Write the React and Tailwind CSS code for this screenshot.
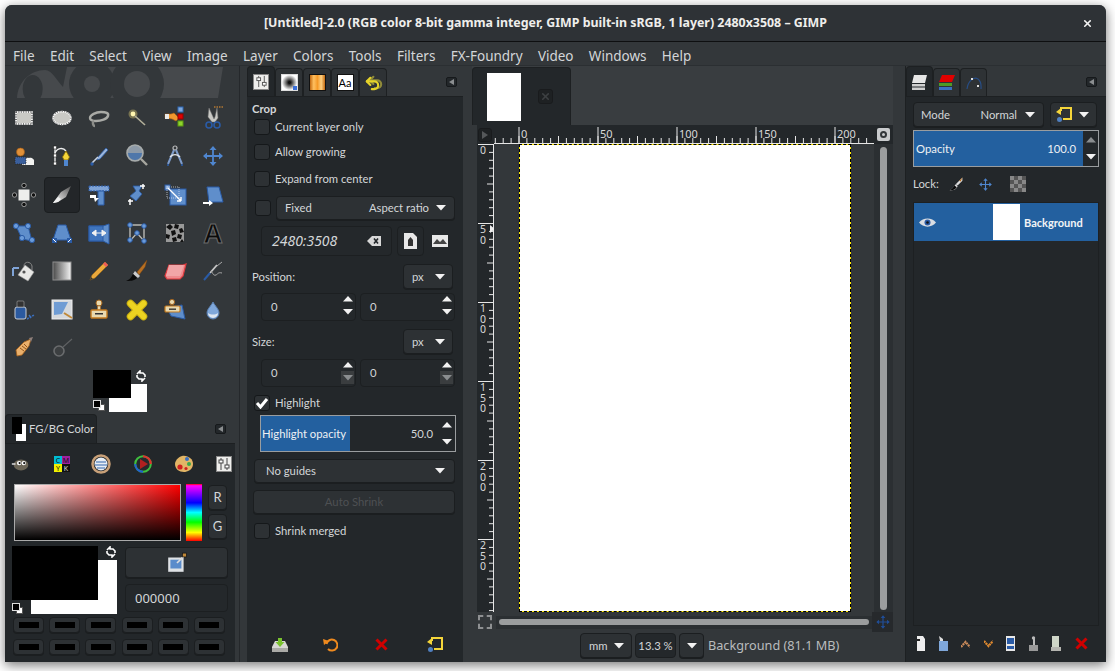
import { X, Undo2 } from "lucide-react";

const B = "#5f8ecb";
const D = "#2a5ba6";
const W = "#eeeeec";

const menus = ["File", "Edit", "Select", "View", "Image", "Layer", "Colors", "Tools", "Filters", "FX-Foundry", "Video", "Windows", "Help"];

function Ic({ children, size = 24, vb = "0 0 24 24", className = "" }) {
  return (
    <svg width={size} height={size} viewBox={vb} className={"shrink-0 " + className}>
      {children}
    </svg>
  );
}

function Down({ dim }) {
  return (
    <svg width="10" height="6" viewBox="0 0 10 6" className="shrink-0">
      <polygon points="0,0 10,0 5,5.5" fill={dim ? "#8a8d8f" : "#f2f2f2"} />
    </svg>
  );
}

function Up({ dim }) {
  return (
    <svg width="10" height="6" viewBox="0 0 10 6" className="shrink-0">
      <polygon points="0,5.5 10,5.5 5,0" fill={dim ? "#8a8d8f" : "#f2f2f2"} />
    </svg>
  );
}

function Move({ color = "#4f86cf", size = 24 }) {
  return (
    <Ic size={size}>
      <path d="M12 3v18M3 12h18" stroke={color} strokeWidth="1.8" />
      <path d="M12 2l3.5 4h-7zM12 22l3.5-4h-7zM2 12l4-3.5v7zM22 12l-4-3.5v7z" fill={color} />
    </Ic>
  );
}

const tools = [
  // row 1
  <Ic><rect x="4" y="6" width="16" height="12" fill="#c9c9c5" stroke="#fff" strokeWidth="1.6" /><rect x="4" y="6" width="16" height="12" fill="none" stroke="#111" strokeWidth="1.2" strokeDasharray="1 1.4" /></Ic>,
  <Ic><ellipse cx="12" cy="12" rx="9" ry="6.5" fill="#c9c9c5" stroke="#fff" strokeWidth="1.6" /><ellipse cx="12" cy="12" rx="9" ry="6.5" fill="none" stroke="#444" strokeWidth="1" strokeDasharray="1 1.4" /></Ic>,
  <Ic><path d="M3 12c0-3 6-6 11-6s8 1 7 4-7 5-12 5c-4 0-6-1-6-3z" fill="none" stroke="#a9aaa6" strokeWidth="2.4" /><path d="M7 15c-2 1-1 5 1 5" fill="none" stroke="#8c8d89" strokeWidth="2.4" /></Ic>,
  <Ic><circle cx="8" cy="8" r="4.5" fill="#f5e27a" opacity=".35" /><circle cx="8" cy="8" r="2.4" fill="#fff6b0" /><path d="M10 10l10 9" stroke="#b3b09a" strokeWidth="1.6" /></Ic>,
  <Ic><path d="M2 8h6l3-1 5 5-3 3-4-2-7-1z" fill="#f0972e" stroke="#a85d10" strokeWidth=".6" /><rect x="2" y="8" width="4" height="5" fill="#e8e8e8" /><rect x="15" y="1" width="5" height="5" fill="#7fa7da" stroke="#2f68b5" /><rect x="15" y="8" width="5" height="5" fill="#e00000" stroke="#900" /><rect x="15" y="15" width="5" height="5" fill="#8ed42c" stroke="#5d9a10" /></Ic>,
  <Ic><path d="M8 2l5 11 1-2 2-9 1 10-3 4h-3L7 11z" fill="#c9c9c5" stroke="#777" strokeWidth=".5" /><circle cx="8" cy="19" r="3" fill="none" stroke="#2a5ba6" strokeWidth="1.6" /><circle cx="16" cy="19" r="3" fill="none" stroke="#2a5ba6" strokeWidth="1.6" /><path d="M13 1h9" stroke="#f0972e" strokeWidth="1" strokeDasharray="1.5 1" /></Ic>,
  // row 2
  <Ic><path d="M12 17c0-3 3-4 5-3 2-1 6 1 5 4v3H10z" fill="#f2f2f0" /><rect x="3" y="13" width="11" height="7" fill="#3a5f9c" stroke="#222" strokeDasharray="1 1" strokeWidth=".7" /><circle cx="8.5" cy="8" r="4" fill="#e0913a" stroke="#a85d10" strokeWidth=".6" /></Ic>,
  <Ic><path d="M5 4v16" stroke="#eee" strokeWidth="1.4" /><path d="M5 9c2-5 8-6 11-2" stroke="#eee" strokeWidth="1.4" fill="none" /><rect x="3.5" y="2" width="3" height="3" fill="#fff" stroke="#222" strokeWidth=".6" /><rect x="3.5" y="10" width="3" height="3" fill="#fff" stroke="#222" strokeWidth=".6" /><rect x="3.5" y="18" width="3" height="3" fill="#fff" stroke="#222" strokeWidth=".6" /><path d="M16 7l3.5 6-1.5 3h-4l-1.5-3z" fill="#f5d53a" stroke="#8a6d00" strokeWidth=".8" /><rect x="14" y="16" width="4" height="6" fill="#4f86cf" /></Ic>,
  <Ic><path d="M19 4l-8 9-1 3 3-1 8-9z" fill="#9ab5dc" stroke="#2a5ba6" strokeWidth=".8" /><path d="M11 13l-6 6" stroke="#c8d3e3" strokeWidth="1.6" /><circle cx="5" cy="20" r="1.7" fill="#2a5ba6" /></Ic>,
  <Ic><circle cx="10" cy="9" r="8" fill="#8d9aa8" stroke="#a7abab" strokeWidth="1.6" /><path d="M3 9a7 7 0 0 0 14 0z" fill="#4f77aa" /><path d="M16 15l6 6" stroke="#a7a79f" strokeWidth="2.4" /></Ic>,
  <Ic><circle cx="12" cy="4" r="2" fill="none" stroke="#bbb" strokeWidth="1.2" /><path d="M11 6L5 20M13 6l6 14" stroke="#7e9ccb" strokeWidth="2" /><path d="M7 13c3-3 7-3 10 0" stroke="#dfe3e8" strokeWidth="1.6" fill="none" /><path d="M5 20v2M19 20v2" stroke="#2a5ba6" strokeWidth="1.6" /></Ic>,
  <Move />,
  // row 3
  <Ic><rect x="6.5" y="6.5" width="11" height="11" fill={W} /><circle cx="12" cy="2.5" r="2.2" fill="#111" stroke="#ddd" strokeWidth=".6" /><circle cx="12" cy="21.5" r="2.2" fill="#111" stroke="#ddd" strokeWidth=".6" /><circle cx="2.5" cy="12" r="2.2" fill="#111" stroke="#ddd" strokeWidth=".6" /><circle cx="21.5" cy="12" r="2.2" fill="#111" stroke="#ddd" strokeWidth=".6" /></Ic>,
  <Ic><defs><linearGradient id="kn" x1="0" y1="1" x2="1" y2="0"><stop offset="0" stopColor="#fff" /><stop offset="1" stopColor="#555" /></linearGradient></defs><path d="M3 20l8-11 10-6-5 11-8 5z" fill="url(#kn)" /><path d="M3 20l5-1 3-3-3-2z" fill="#f0f0f0" /></Ic>,
  <Ic><rect x="2" y="3" width="20" height="5" fill="#7fa3d6" stroke={D} strokeDasharray="2 1" /><path d="M11 8h6v14h-6z" fill={B} stroke={D} /><path d="M3 12h6v3h3l-4 4-1-4H3z" fill="#fff" /></Ic>,
  <Ic><path d="M8 3h9l-3 5 3 3-6 7-6-5 6-5z" fill={B} stroke={D} strokeWidth=".8" /><path d="M15 3h5M18 1v5" stroke="#fff" strokeWidth="1.5" /><path d="M3 18h5M5 16v6" stroke="#fff" strokeWidth="1.5" /></Ic>,
  <Ic><rect x="7" y="6" width="16" height="16" fill={B} stroke={D} /><rect x="2" y="2" width="5" height="5" fill="#8fb0dd" stroke={D} /><rect x="4" y="4" width="12" height="11" fill="none" stroke="#dfe8f4" strokeDasharray="1 1" strokeWidth=".7" /><path d="M5 5l13 13M18 18v-4M18 18h-4" stroke="#fff" strokeWidth="1.4" fill="none" /></Ic>,
  <Ic><path d="M6 4h12l4 15H8z" fill={B} stroke={D} /><path d="M2 19h6v-2l4 3-4 3v-2H2z" fill="#fff" /></Ic>,
  // row 4
  <Ic><path d="M4 5h12l4 15-10-2z" fill={B} stroke={D} /><circle cx="4" cy="5" r="2.6" fill="#6b9bd9" stroke={D} /><circle cx="16" cy="5" r="2.6" fill="#6b9bd9" stroke={D} /><circle cx="20" cy="19" r="2.6" fill="#6b9bd9" stroke={D} /><circle cx="10" cy="17" r="2.6" fill="#6b9bd9" stroke={D} /></Ic>,
  <Ic><path d="M8 4h8l5 15H3z" fill={B} stroke={D} /><rect x="2" y="17" width="5" height="5" fill={D} /><rect x="17" y="17" width="5" height="5" fill={D} /><path d="M3 18l3 3M21 18l-3 3" stroke="#fff" /></Ic>,
  <Ic><path d="M2 5h14l6-2v20l-6-3H2z" fill={B} stroke={D} /><rect x="2" y="5" width="14" height="15" fill="#3f74bd" stroke={D} /><path d="M6 12h12M5 12l4-3v6zM19 12l-4-3v6z" fill="#f2f2f2" stroke="#f2f2f2" /></Ic>,
  <Ic><path d="M5 4h14v16l-7-8-7 8z" fill="none" stroke="#b9b9b4" strokeWidth="1.4" /><g fill="#6b9bd9" stroke={D}><circle cx="5" cy="4" r="2.3" /><circle cx="19" cy="5" r="2.3" /><circle cx="5" cy="19" r="2.3" /><circle cx="12" cy="12" r="2.3" /><circle cx="19" cy="20" r="2.3" /></g></Ic>,
  <Ic><rect x="3" y="3" width="18" height="18" fill="#999" /><g fill="#111"><path d="M3 6l4-3 3 3-3 3zM12 3l4 1-1 4-4-1zM19 7l2 4-4 1-1-4zM8 10l4-1 1 4-4 2zM3 13l4 1-1 4-3-1zM15 13l4 1-1 4-4-1zM9 17l4-1 1 4-4 1zM19 18l2 3h-4z" /></g></Ic>,
  <Ic><text x="12" y="22" textAnchor="middle" fontFamily="Liberation Sans, sans-serif" fontWeight="700" fontSize="27" fill="#0a0a0a" stroke="#6a6a6a" strokeWidth="1">A</text></Ic>,
  // row 5
  <Ic><path d="M1 9v8" stroke="#7fa3d6" strokeWidth="2" /><path d="M1 9h6" stroke="#7fa3d6" strokeWidth="2" /><path d="M13 6l9 7-6 9-10-6z" fill="#e8e8e6" stroke="#999" strokeWidth=".6" /><circle cx="12" cy="13" r="1.6" fill="#555" /><path d="M12 7c0-5 7-5 8 0v4" fill="none" stroke="#888" strokeWidth="1" /></Ic>,
  <Ic><defs><linearGradient id="gr" x1="0" x2="1"><stop offset="0" stopColor="#4a4a4a" /><stop offset="1" stopColor="#f4f4f4" /></linearGradient></defs><rect x="3" y="3" width="18" height="18" fill="url(#gr)" stroke="#8e8e8e" /></Ic>,
  <Ic><path d="M18 3l3 3L8 19l-5 2 2-5z" fill="#eba93c" stroke="#9c6a12" strokeWidth=".6" /><path d="M18 3l3 3-2 2-3-3z" fill="#ec5a5a" /><path d="M3 21l1-3 2 2z" fill="#333" /></Ic>,
  <Ic><path d="M22 1L12 13l2 3 6-8z" fill="#b86f22" stroke="#7a4310" strokeWidth=".4" /><path d="M10 12l5 5-2 2-5-4z" fill="#ccc" /><path d="M8 15l4 4c-3 3-7 3-11 3 3-1 5-3 7-7z" fill="#0a0a0a" /></Ic>,
  <Ic><path d="M6 6h14l3-1-3 12-3 3H4l-2-3z" fill="#ee8a8e" stroke="#e03a3e" strokeWidth="1.2" /><path d="M6 6h15l-4 11H3z" fill="#f1a5a7" /></Ic>,
  <Ic><path d="M16 6L9 14" stroke="#c7c7c7" strokeWidth="1.8" /><path d="M9 14l-6 7" stroke="#2a5ba6" strokeWidth="2" /><path d="M21 3l-5 4M10 12c2 2 2 5 5 4 2-1 2-3 6-2" stroke="#aaa" fill="none" /></Ic>,
  // row 6
  <Ic><rect x="3" y="9" width="11" height="12" rx="2" fill="#2b5aa0" stroke="#c8cdd4" strokeWidth="1" /><rect x="5" y="3" width="7" height="6" rx="1" fill="#333" stroke="#aaa" strokeWidth=".6" /><path d="M15 21l7-4M17 17l2 3" stroke="#3a6fbf" strokeWidth="1.5" strokeDasharray="2 1" /></Ic>,
  <Ic size={24}><rect x="2" y="2" width="20" height="19" fill="#d5d8dc" stroke="#eee" /><path d="M4 4h14l-6 12-8 1z" fill="#6f9cd4" /><path d="M14 15l8 5" stroke="#c08838" strokeWidth="2" /></Ic>,
  <Ic><circle cx="12" cy="5" r="3" fill="#e8d9b0" stroke="#a5651e" /><rect x="10.5" y="8" width="3" height="4" fill="#e8d9b0" stroke="#a5651e" strokeWidth=".6" /><rect x="4" y="12" width="16" height="8" rx="1" fill="#e8d9b0" stroke="#c47a1e" strokeWidth="1.4" /><rect x="8" y="15" width="8" height="1.5" fill="#333" /></Ic>,
  <Ic><path d="M5.500 5.500l13 13M18.500 5.500l-13 13" stroke="#c9ae10" strokeWidth="7.500" strokeLinecap="round" /><path d="M5.500 5.500l13 13M18.500 5.500l-13 13" stroke="#ecd321" strokeWidth="5.500" strokeLinecap="round" /></Ic>,
  <Ic><path d="M4 10l15-3 3 14-14-3z" fill={B} stroke={D} /><circle cx="9" cy="4" r="2.6" fill="#e8d9b0" stroke="#a5651e" /><rect x="2" y="8" width="15" height="6" rx="1" fill="#e8d9b0" stroke="#c47a1e" strokeWidth="1.2" /><rect x="6" y="10.5" width="7" height="1.4" fill="#333" /></Ic>,
  <Ic><path d="M12 4c2 4 6 7 6 11a6 6 0 0 1-12 0c0-4 4-7 6-11z" fill="#7fa7da" stroke="#5a7fb0" /><path d="M7 15a5 5 0 0 0 10 0c-3 2-7 2-10 0z" fill="#dfe7f1" /></Ic>,
  // row 7
  <Ic><path d="M4 14l8-8 7-3-2 7-7 9-5 1z" fill="#eab06c" stroke="#a8621a" strokeWidth=".8" /><path d="M8 12l4 3M10 10l4 3M12 8l3 3" stroke="#8a4b10" strokeWidth=".9" /><path d="M17 2l4-1-2 5z" fill="#8f7f7a" /></Ic>,
  <Ic><circle cx="9" cy="15" r="5" fill="#3c3f41" stroke="#6a6c6e" strokeWidth="1.6" /><path d="M13 11l9-8" stroke="#5f6163" strokeWidth="1.2" /></Ic>,
];

function Box({ className = "", children }) {
  return <div className={"flex items-center bg-[#2d3134] border border-[#1b1e20] rounded-[4px] shadow-[0_1px_0_#1b1e20] " + className}>{children}</div>;
}

function Entry({ className = "", children }) {
  return <div className={"flex items-center bg-[#24282b] border border-[#1c1f21] rounded-[4px] " + className}>{children}</div>;
}

function Check({ checked, label, className = "" }) {
  return (
    <div className={"flex items-center gap-[5px] " + className}>
      <div className="w-[16px] h-[16px] flex items-center justify-center bg-[#2d3134] border border-[#15181a] rounded-[3px]">
        {checked && (
          <svg width="14" height="12" viewBox="0 0 14 12">
            <path d="M2 6l3.5 4L12 2" stroke="#fff" strokeWidth="3" fill="none" />
          </svg>
        )}
      </div>
      {label && <span>{label}</span>}
    </div>
  );
}

function Spin({ value, dim, w = "w-[95px]" }) {
  return (
    <Entry className={"h-[28px] pl-[9px] relative " + w}>
      <span>{value}</span>
      <div className="ml-auto w-[13px] mr-[1px] h-full flex flex-col items-center justify-around">
        <Up />
        <div className={"w-[13px] h-[13px] flex items-center justify-center " + (dim ? "bg-[#3a3d3f]" : "")}>
          <Down dim={dim} />
        </div>
      </div>
    </Entry>
  );
}

function DockTabs({ tabs, first, widths }) {
  return (
    <div className="flex items-end h-[30px]">
      {tabs.map((t, i) => (
        <div
          key={i}
          className={
            "flex items-center justify-center border border-b-0 border-[#1d2022] rounded-t-[4px] " +
            (i === first ? "h-[30px] bg-[#23272a]" : "h-[28px] bg-[#2e3235]") +
            " " +
            widths
          }
        >
          {t}
        </div>
      ))}
    </div>
  );
}

function ConfigBtn({ className = "" }) {
  return (
    <div className={"w-[11px] h-[10px] bg-[#23272a] border border-[#16191b] rounded-[2px] flex items-center justify-center " + className}>
      <svg width="5" height="6" viewBox="0 0 5 6">
        <polygon points="5,0 5,6 0,3" fill="#8b8e90" />
      </svg>
    </div>
  );
}

function Ruler() {
  const major = [0, 50, 100, 150, 200];
  const ticks = [];
  for (let i = -3; i < 45; i++) {
    const x = 25 + i * 7.9;
    ticks.push(<line key={i} x1={x} x2={x} y1={i % 5 === 0 ? 11 : 13} y2="18" stroke="#e6e6e6" />);
  }
  return (
    <svg width="380" height="19" className="block shrink-0">
      <line x1="0" x2="380" y1="18.5" y2="18.5" stroke="#e6e6e6" />
      {ticks}
      {major.map((m) => {
        const x = 25 + m * 1.58;
        return (
          <g key={m}>
            <line x1={x} x2={x} y1="2" y2="18" stroke="#e6e6e6" />
            <text x={x + 2} y="13" fontSize="11" fill="#d8d8d8" fontFamily="Noto Sans, sans-serif">{m}</text>
          </g>
        );
      })}
    </svg>
  );
}

function VRuler() {
  const major = [0, 50, 100, 150, 200, 250];
  const ticks = [];
  for (let i = 0; i < 60; i++) {
    const y = i * 7.9 + 0.5;
    ticks.push(<line key={i} x1={i % 5 === 0 ? 10 : 12} x2="17" y1={y} y2={y} stroke="#e6e6e6" />);
  }
  return (
    <svg width="17" height="468" className="block shrink-0">
      <line x1="16.5" x2="16.5" y1="0" y2="468" stroke="#e6e6e6" />
      {ticks}
      {major.map((m) => {
        const y = m * 1.58;
        return (
          <g key={m}>
            <line x1="1" x2="17" y1={y + 0.5} y2={y + 0.5} stroke="#e6e6e6" />
            {String(m).split("").map((c, j) => (
              <text key={j} x="3" y={y + 10 + j * 10.5} fontSize="10.5" fill="#d8d8d8" fontFamily="Noto Sans, sans-serif">{c}</text>
            ))}
          </g>
        );
      })}
      <polygon points="13,81 18,85 13,89" fill="#eee" />
    </svg>
  );
}

export default function App() {
  return (
    <div className="w-[1115px] h-[671px] bg-white pl-[5px] pt-[5px] overflow-hidden font-['Lato',sans-serif] text-[#d3d6d8] text-[11.3px] leading-none">
      <div className="w-[1101px] h-[657px] flex flex-col bg-[#33373a] rounded-t-[7px] shadow-[0_3px_12px_rgba(0,0,0,0.55)]">
        {/* title bar */}
        <div className="h-[37px] shrink-0 flex items-center bg-[#2e3236] border-b border-[#0e0f10] rounded-t-[7px] relative pr-[20px]">
          <span className="flex-1 text-center font-bold text-[12.4px] text-[#eeeeec] font-['Noto_Sans',sans-serif]">
            [Untitled]-2.0 (RGB color 8-bit gamma integer, GIMP built-in sRGB, 1 layer) 2480x3508 – GIMP
          </span>
          <X className="absolute right-[13px] top-[13px]" size={11} strokeWidth={3.5} color="#f4f4f4" />
        </div>

        {/* menu bar */}
        <div className="h-[24px] shrink-0 flex items-center gap-[15.3px] pl-[8px] pt-[6px] text-[13.5px] text-[#d3d6d8] border-b border-[#2b2f32] font-['Noto_Sans',sans-serif]">
          {menus.map((m) => (
            <span key={m}>{m}</span>
          ))}
        </div>

        <div className="flex-1 flex min-h-0">
          {/* toolbox */}
          <div className="w-[235px] shrink-0 flex flex-col border-r border-[#25282b]">
            <svg width="206" height="31" viewBox="0 0 206 31" className="ml-[12px] shrink-0 mt-[1px]">
              <path d="M0 31C1 14 14 3 28 3c7 0 12 11 18 17L50 0h156l-5 31z" fill="#46494c" />
              <ellipse cx="15.7" cy="22" rx="10" ry="14" fill="#33373a" />
              <circle cx="75" cy="17" r="23" fill="#33373a" />
              <circle cx="75" cy="17" r="8" fill="#46494c" />
              <circle cx="120" cy="17" r="27" fill="#33373a" />
              <circle cx="120" cy="17" r="13" fill="#46494c" />
            </svg>
            <div className="grid grid-cols-[repeat(6,37.8px)] auto-rows-[38.3px] mt-[1px]">
              {tools.map((t, i) => (
                <div key={i} className="flex items-center justify-center">
                  {i === 13 ? (
                    <div className="w-[36px] h-[36px] flex items-center justify-center bg-[#232629] border border-[#1b1e20] rounded-[4px]">{t}</div>
                  ) : (
                    t
                  )}
                </div>
              ))}
            </div>
            <div className="relative h-[44px] shrink-0 ml-[88px] mt-[3px]">
              <div className="absolute left-[16px] top-[14px] w-[38px] h-[28px] bg-white" />
              <div className="absolute left-0 top-0 w-[38px] h-[28px] bg-black" />
              <svg width="12" height="12" viewBox="0 0 12 12" className="absolute left-[42px] top-[0px]">
                <path d="M2 4l3-3v2h3l2 2v2M10 8l-3 3V9H4L2 7V5" stroke="#fff" strokeWidth="1.6" fill="none" />
              </svg>
              <div className="absolute left-[5px] top-[34px] w-[7px] h-[7px] bg-white border border-[#555]" />
              <div className="absolute left-0 top-[30px] w-[8px] h-[8px] bg-black border border-[#ddd]" />
            </div>

            {/* FG/BG dock */}
            <div className="flex items-end h-[29px] relative shrink-0 mr-[4px]">
              <div className="h-[29px] w-[92px] flex items-center gap-[3px] pl-[6px] bg-[#23272a] border border-b-0 border-[#1d2022] rounded-t-[4px] whitespace-nowrap">
                <div className="relative w-[14px] h-[24px] shrink-0">
                  <div className="absolute left-[4px] top-[7px] w-[10px] h-[17px] bg-white" />
                  <div className="absolute left-0 top-0 w-[10px] h-[17px] bg-black" />
                </div>
                <span>FG/BG Color</span>
              </div>
              <ConfigBtn className="absolute right-[9px] top-[10px]" />
            </div>
            <div className="flex-1 mr-[4px] bg-[#23272a] border-t border-[#1d2022] px-[9px] relative overflow-hidden">
              <div className="h-[40px] flex items-center -ml-[4px] justify-between pr-0 w-[222px]">
                <Ic size={22}><ellipse cx="12" cy="13" rx="8" ry="6" fill="#6c6657" /><circle cx="10" cy="11" r="2.4" fill="#fff" /><circle cx="15" cy="11" r="2.4" fill="#fff" /><circle cx="10.5" cy="11" r="1.2" fill="#111" /><circle cx="15.5" cy="11" r="1.2" fill="#111" /><path d="M2 12h4" stroke="#ddd" strokeWidth="1.6" /></Ic>
                <Ic size={16} vb="0 0 16 16"><rect width="8" height="8" fill="#00bcd4" /><rect x="8" width="8" height="8" fill="#a020a0" /><rect y="8" width="8" height="8" fill="#f0f000" /><rect x="8" y="8" width="8" height="8" fill="#111" /><text x="4" y="7" fontSize="7" textAnchor="middle" fontFamily="Noto Sans, sans-serif" fill="#111">C</text><text x="12" y="7" fontSize="7" textAnchor="middle" fontFamily="Noto Sans, sans-serif" fill="#111">M</text><text x="4" y="15" fontSize="7" textAnchor="middle" fontFamily="Noto Sans, sans-serif" fill="#111">Y</text><text x="12" y="15" fontSize="7" textAnchor="middle" fontFamily="Noto Sans, sans-serif" fill="#ddd">K</text></Ic>
                <Ic size={20} vb="0 0 20 20"><circle cx="10" cy="10" r="8.5" fill="none" stroke="#c8a078" strokeWidth="2.5" /><circle cx="10" cy="10" r="6.5" fill="#e8eef4" /><path d="M5 8h10M4 11h12M6 14h8" stroke="#6d93c4" strokeWidth="1.5" /></Ic>
                <Ic size={20} vb="0 0 20 20"><circle cx="10" cy="10" r="7.8" fill="#26292c" stroke="#3fbf3f" strokeWidth="2" /><path d="M10 2.2A7.8 7.8 0 0 1 17.8 10" fill="none" stroke="#e03030" strokeWidth="2" /><path d="M2.2 10A7.8 7.8 0 0 0 10 17.8" fill="none" stroke="#2060d0" strokeWidth="2" /><polygon points="7,5 15,10 7,15" fill="#b02020" /></Ic>
                <Ic size={20} vb="0 0 20 20"><path d="M8 2c6-1 11 3 11 8 0 6-6 8-9 8-5 0-9-3-9-8 0-3 3-7 7-8z" fill="#e2b566" /><circle cx="13" cy="5" r="2" fill="#3a6fbf" /><circle cx="15" cy="10" r="2" fill="#3aa84a" /><circle cx="6" cy="13" r="2.6" fill="#d02020" /><circle cx="12" cy="14.5" r="1.6" fill="#d02020" /></Ic>
                <div className="w-[16px] h-[16px] bg-[#eeeeec] border border-[#888] flex items-center justify-center">
                  <Ic size={14} vb="0 0 14 14"><path d="M4 1v12M10 1v12" stroke="#444" /><rect x="2" y="3" width="4" height="3" fill="#fff" stroke="#444" /><rect x="8" y="8" width="4" height="3" fill="#fff" stroke="#444" /></Ic>
                </div>
              </div>
              <div className="flex">
                <div className="w-[167px] h-[57px] shrink-0 border border-[#aaa] bg-[linear-gradient(to_top,#000,transparent),linear-gradient(to_right,#fff,#f00)]" />
                <div className="w-[16px] h-[57px] ml-[5px] shrink-0 bg-[linear-gradient(to_bottom,#f00_0%,#f0f_3%,#00f_33%,#0ff_50%,#0f0_67%,#ff0_85%,#f00_100%)]" />
                <div className="flex flex-col gap-[4px] ml-[6px] mt-[1px] shrink-0">
                  <Box className="w-[19px] h-[25px] justify-center text-[13px] bg-[#2a2d30]">R</Box>
                  <Box className="w-[19px] h-[25px] justify-center text-[13px] bg-[#2a2d30]">G</Box>
                </div>
              </div>
              <div className="flex mt-[5px] -ml-[2px]">
                <div className="relative w-[113px] h-[68px] shrink-0">
                  <div className="absolute left-[19px] top-[14px] w-[86px] h-[54px] bg-white" />
                  <div className="absolute left-0 top-0 w-[86px] h-[54px] bg-black" />
                  <svg width="12" height="12" viewBox="0 0 12 12" className="absolute left-[93px] top-0">
                    <path d="M2 4l3-3v2h3l2 2v2M10 8l-3 3V9H4L2 7V5" stroke="#fff" strokeWidth="1.6" fill="none" />
                  </svg>
                  <div className="absolute left-[4px] top-[61px] w-[7px] h-[7px] bg-white border border-[#555]" />
                  <div className="absolute left-0 top-[57px] w-[8px] h-[8px] bg-black border border-[#ddd]" />
                </div>
                <div className="flex flex-col gap-[6px] mt-[1px]">
                  <Box className="w-[103px] h-[31px] justify-center">
                    <Ic size={22} vb="0 0 20 20"><rect x="2" y="5" width="14" height="13" fill="#dfe2e5" /><rect x="4" y="7" width="10" height="8" fill="#5b8ccb" /><path d="M10 10l6-6" stroke="#ddd" strokeWidth="1.5" /><rect x="15" y="1" width="3.5" height="3.5" fill="#c08838" stroke="#111" strokeWidth=".6" /></Ic>
                  </Box>
                  <Entry className="w-[103px] h-[28px] pl-[9px] text-[13px] font-['Noto_Sans',sans-serif]">000000</Entry>
                </div>
              </div>
              <div className="grid grid-cols-[repeat(6,36.2px)] gap-y-[6px] mt-[3px] -ml-[1px]">
                {Array.from({ length: 12 }).map((_, i) => (
                  <Box key={i} className="w-[31px] h-[16px] justify-center">
                    <div className="w-[20px] h-[6px] bg-black" />
                  </Box>
                ))}
              </div>
            </div>
          </div>

          {/* tool options */}
          <div className="w-[232px] shrink-0 flex ml-[5px]">
            <div className="w-[221px] shrink-0 flex flex-col ml-0 pl-[2px]">
              <div className="relative shrink-0">
                <DockTabs
                  first={0}
                  widths="w-[28px]"
                  tabs={[
                    <div className="w-[16px] h-[16px] bg-[#eeeeec] border border-[#888] flex items-center justify-center"><Ic size={13} vb="0 0 14 14"><path d="M4 1v12M10 1v12" stroke="#555" /><rect x="2" y="3" width="4" height="3" fill="#fff" stroke="#555" /><rect x="8" y="8" width="4" height="3" fill="#fff" stroke="#555" /></Ic></div>,
                    <div className="w-[17px] h-[17px] bg-[radial-gradient(circle,#111_10%,#fff_72%)] border border-[#ddd] relative"><span className="absolute right-0 bottom-0 w-[4px] h-[4px] bg-[#3a6fd8]" /></div>,
                    <div className="w-[17px] h-[17px] bg-[linear-gradient(to_right,#c56a10,#ffc060,#f59a28,#ffd080,#c56a10)] border border-[#111]" />,
                    <div className="w-[17px] h-[17px] bg-white border border-[#111] flex items-center justify-center text-[11px] text-black">Aa</div>,
                    <div className="relative w-[18px] h-[18px]">
                      <Undo2 className="absolute left-[3px] top-0" size={17} strokeWidth={3} color="#8f8a3a" />
                      <Undo2 className="absolute left-0 top-[1px]" size={17} strokeWidth={3} color="#e6d32a" />
                    </div>,
                  ]}
                />
                <ConfigBtn className="absolute right-[9px] top-[11px]" />
              </div>
              <div className="flex-1 bg-[#23272a] border-t border-[#1d2022] w-[216px] pl-[5px] flex flex-col">
                <div className="mt-[6px] h-[12px] flex items-center font-bold">Crop</div>
                <Check className="mt-[4px] ml-[2px]" label="Current layer only" />
                <Check className="mt-[9px] ml-[2px]" label="Allow growing" />
                <Check className="mt-[11px] ml-[2px]" label="Expand from center" />
                <div className="flex items-center mt-[9px] ml-[3px] gap-[5px]">
                  <Check />
                  <Box className="w-[179px] h-[24px] pl-[8px] pr-[8px]">
                    <span>Fixed</span>
                    <span className="ml-auto mr-[7px]">Aspect ratio</span>
                    <Down />
                  </Box>
                </div>
                <div className="flex items-center mt-[6px] ml-[9px]">
                  <Entry className="w-[131px] h-[30px] pl-[10px] pr-[9px] text-[14px] italic font-['Noto_Sans',sans-serif]">
                    <span>2480:3508</span>
                    <svg width="16" height="12" viewBox="0 0 16 12" className="ml-auto">
                      <path d="M1 6l5-5h9v10H6z" fill="#d8d8d8" />
                      <path d="M8 3.5l4 5M12 3.5l-4 5" stroke="#23272a" strokeWidth="1.6" />
                    </svg>
                  </Entry>
                  <Entry className="w-[27px] h-[30px] ml-[5px] justify-center">
                    <svg width="13" height="16" viewBox="0 0 13 16"><path d="M0 0h9l4 4v12H0z" fill="#e8e8e8" /><path d="M4 7l2.500-3 2.500 3v6H4z" fill="#333" /></svg>
                  </Entry>
                  <div className="w-[28px] h-[30px] flex items-center justify-center ml-[2px]">
                    <svg width="16" height="12" viewBox="0 0 16 12"><rect width="16" height="12" fill="#e8e8e8" /><path d="M1 9l4-5 3 3 3-3 4 5z" fill="#444" /></svg>
                  </div>
                </div>
                <div className="flex items-center justify-between mt-[8px] mr-[10px] h-[25px]">
                  <span>Position:</span>
                  <Box className="w-[50px] h-[25px] pl-[8px] pr-[7px] justify-between"><span>px</span><Down /></Box>
                </div>
                <div className="flex gap-[4px] mt-[4px] ml-[9px]">
                  <Spin value="0" />
                  <Spin value="0" />
                </div>
                <div className="flex items-center justify-between mt-[8px] mr-[10px] h-[25px]">
                  <span>Size:</span>
                  <Box className="w-[50px] h-[25px] pl-[8px] pr-[7px] justify-between"><span>px</span><Down /></Box>
                </div>
                <div className="flex gap-[4px] mt-[5px] ml-[9px]">
                  <Spin value="0" dim />
                  <Spin value="0" dim />
                </div>
                <Check className="mt-[8px] ml-[2px]" checked label="Highlight" />
                <div className="mt-[4px] ml-[8px] w-[196px] h-[37px] flex items-center border border-[#9a9d9f] bg-[#23272a] relative">
                  <div className="w-[89px] h-full bg-[#23609f] flex items-center pl-[1px] text-[#eef1f4] whitespace-nowrap">Highlight opacity</div>
                  <span className="ml-auto mr-[22px]">50.0</span>
                  <div className="absolute right-[3px] top-0 bottom-0 flex flex-col justify-around items-center">
                    <Up />
                    <Down />
                  </div>
                </div>
                <Box className="mt-[7px] ml-[2px] w-[201px] h-[24px] pl-[11px] pr-[9px] justify-between"><span>No guides</span><Down /></Box>
                <Box className="mt-[7px] ml-[1px] w-[202px] h-[24px] justify-center text-[#4d5053] bg-[#2a2e31]">Auto Shrink</Box>
                <Check className="mt-[9px] ml-[2px]" label="Shrink merged" />
                <div className="mt-[98px] flex items-center pl-[20px]">
                  <div className="w-[16px]">
                    <svg width="16" height="14" viewBox="0 0 16 14"><path d="M0 9l3-6h10l3 6v5H0z" fill="#d8d8d4" /><rect y="10" width="16" height="4" fill="#aaaaa6" /><path d="M6 0h4v4h2.500L8 9 3.500 4H6z" fill="#79c22f" /></svg>
                  </div>
                  <div className="ml-[35px] w-[16px]">
                    <svg width="15" height="14" viewBox="0 0 15 14"><path d="M3.500 6a5.500 5.500 0 1 1 1.500 5" fill="none" stroke="#ef8a1e" strokeWidth="2" /><polygon points="0,1 6,3 1,7" fill="#ef8a1e" /></svg>
                  </div>
                  <div className="ml-[36px] w-[16px]">
                    <svg width="13" height="13" viewBox="0 0 13 13"><path d="M1.500 1.500l10 10M11.500 1.500l-10 10" stroke="#d00000" strokeWidth="3" /></svg>
                  </div>
                  <div className="ml-[36px] w-[16px]">
                    <svg width="16" height="15" viewBox="0 0 16 15"><path d="M5 4V1h10v11H7" fill="none" stroke="#f5d53a" strokeWidth="2" /><polygon points="0,5 5,1 5,8" fill="#f5d53a" /><circle cx="3.500" cy="12.500" r="2.500" fill="#4f7fc0" /></svg>
                  </div>
                </div>
              </div>
            </div>
          </div>

          {/* image window */}
          <div className="w-[421px] shrink-0 ml-[-5px] flex flex-col bg-[#33373a]">
            <div className="h-[59px] shrink-0 flex bg-[#393d40] pt-[1px]">
              <div className="w-[99px] h-[58px] flex items-center bg-[#23272a] border border-b-0 border-[#1d2022] rounded-t-[4px] pl-[14px]">
                <div className="w-[34px] h-[48px] bg-white" />
                <div className="ml-[17px] w-[15px] h-[15px] flex items-center justify-center bg-[#1e2123] border border-[#191b1d] rounded-[3px]">
                  <X size={11} strokeWidth={3.5} color="#3d4043" />
                </div>
              </div>
            </div>
            <div className="flex-1 flex flex-col pl-[5px]">
              <div className="flex h-[19px] shrink-0 bg-[#23272a]">
                <div className="w-[17px] flex items-center shrink-0 pl-[1px]">
                  <div className="w-[14px] h-[14px] bg-[#1e2123] border border-[#191b1d] rounded-[3px] flex items-center justify-center">
                    <svg width="6" height="8" viewBox="0 0 6 8"><polygon points="0,0 6,4 0,8" fill="#55585a" /></svg>
                  </div>
                </div>
                <Ruler />
                <div className="flex-1 flex items-center justify-center bg-[#23272a]">
                  <div className="w-[13px] h-[13px] bg-[#c9cbcd] rounded-[2px] flex items-center justify-center">
                    <div className="w-[7px] h-[7px] rounded-full border-2 border-[#33373a]" />
                  </div>
                </div>
              </div>
              <div className="flex shrink-0 h-[468px]">
                <div className="bg-[#23272a] shrink-0"><VRuler /></div>
                <div className="w-[380px] shrink-0 pl-[25px] bg-[#33373a]">
                  <div className="w-[332px] h-[468px] bg-[#ffea00] border border-dashed border-black">
                    <div className="w-full h-full bg-white" />
                  </div>
                </div>
                <div className="flex-1 flex justify-center pt-[3px] pb-[2px] bg-[#2b2f32]">
                  <div className="w-[7px] h-full bg-[#9b9d9e] rounded-full" />
                </div>
              </div>
              <div className="h-[20px] shrink-0 flex items-center">
                <div className="w-[22px] flex justify-center pr-[6px]">
                  <div className="w-[14px] h-[14px] border-2 border-dashed border-[#8e9092]" />
                </div>
                <div className="w-[376px] h-[13px] -ml-[3px] bg-[#2b2f32] flex items-center px-[3px]">
                  <div className="w-full h-[6px] rounded-full bg-[#9b9d9e]" />
                </div>
                <div className="flex-1 h-[20px] bg-[#26292c] flex items-center justify-center">
                  <Move color="#204d96" size={16} />
                </div>
              </div>
              <div className="flex-1 flex items-center pl-[103px] bg-[#33373a] pb-[3px]">
                <Box className="w-[52px] h-[25px] pl-[8px] pr-[7px] justify-between bg-[#2a2e31]"><span>mm</span><Down /></Box>
                <Entry className="w-[41px] h-[25px] ml-[3px] justify-center">13.3 %</Entry>
                <Box className="w-[25px] h-[25px] ml-[3px] justify-center"><Down /></Box>
                <span className="ml-[4px] text-[12.7px] text-[#b9bcbe] whitespace-nowrap font-['Noto_Sans',sans-serif]">Background (81.1 MB)</span>
              </div>
            </div>
          </div>

          {/* layers */}
          <div className="flex-1 ml-[12px] flex flex-col border-l border-[#1d2022]">
            <div className="relative shrink-0">
              <DockTabs
                first={0}
                widths="w-[27px]"
                tabs={[
                  <svg width="16" height="17" viewBox="0 0 16 17"><path d="M2 2h13l-2 8H0z" fill="#e6e6e6" /><path d="M0 11h13v2.500H0zM0 14.500h13V17H0z" fill="#cfcfcf" /></svg>,
                  <svg width="16" height="17" viewBox="0 0 16 17"><path d="M3 1h13l-3 7H0z" fill="#e00000" /><rect y="9" width="13" height="3" fill="#4e9a26" /><rect y="13" width="13" height="3" fill="#3a70c0" /></svg>,
                  <svg width="16" height="16" viewBox="0 0 16 16"><path d="M1 14C2 6 8 1 12 4s3 8 3 10" fill="none" stroke="#274d85" strokeWidth="1.2" /><rect x="5" y="3" width="2" height="2" fill="#ddd" /><rect x="11" y="10" width="2" height="2" fill="#ddd" /></svg>,
                ]}
              />
              <ConfigBtn className="absolute right-[9px] top-[11px]" />
            </div>
            <div className="flex-1 bg-[#23272a] border-t border-[#1d2022] pl-[7px] flex flex-col">
              <div className="flex mt-[5px]">
                <Box className="w-[131px] h-[25px] pl-[7px] pr-[8px]">
                  <span>Mode</span>
                  <span className="ml-auto mr-[8px]">Normal</span>
                  <Down />
                </Box>
                <Box className="w-[47px] h-[25px] ml-[6px] pl-[5px] pr-[7px] justify-between">
                  <svg width="16" height="15" viewBox="0 0 16 15"><path d="M5 4V1h10v11H7" fill="none" stroke="#f5d53a" strokeWidth="2" /><polygon points="0,5 5,1 5,8" fill="#f5d53a" /><circle cx="3.500" cy="12.500" r="2.500" fill="#4f7fc0" /></svg>
                  <Down />
                </Box>
              </div>
              <div className="mt-[3px] w-[186px] h-[37px] flex items-center border border-[#9a9d9f] bg-[#23272a]">
                <div className="w-[169px] h-full bg-[#23609f] flex items-center justify-between px-[2px] pr-[7px] text-[#eef1f4]">
                  <span>Opacity</span>
                  <span>100.0</span>
                </div>
                <div className="flex-1 h-full flex flex-col items-center justify-around">
                  <Up dim />
                  <Down />
                </div>
              </div>
              <div className="flex items-center h-[24px] mt-[5px]">
                <span>Lock:</span>
                <Ic size={16} vb="0 0 20 20" className="ml-[9px]"><path d="M18 2l-8 8 2 2 6-6zM10 10l2 3c-2 4-6 5-10 5 3-2 5-4 8-8z" fill="#ddd" /><path d="M8 12l3 2c-2 3-5 4-9 4 3-2 4-3 6-6z" fill="#0a0a0a" /><path d="M18 2l-4 4 2 1z" fill="#b86f22" /></Ic>
                <div className="ml-[14px]"><Move size={15} /></div>
                <div className="ml-[17px] w-[16px] h-[16px] bg-[repeating-conic-gradient(#555_0_25%,#888_0_50%)] bg-[length:8px_8px]" />
              </div>
              <div className="mt-[6px] w-[186px] h-[424px] border border-[#1d2022]">
                <div className="h-[38px] bg-[#23609f] flex items-center text-[#f2f4f6]">
                  <svg width="17" height="11" viewBox="0 0 17 11" className="ml-[5px]">
                    <path d="M0 5.500C4 0 13 0 17 5.500 13 11 4 11 0 5.500z" fill="#d9dde2" />
                    <circle cx="8.500" cy="5.500" r="3" fill="#2a5ba6" />
                    <circle cx="8.500" cy="5.500" r="1.300" fill="#111" />
                  </svg>
                  <div className="ml-[57px] w-[27px] h-[36px] bg-white" />
                  <span className="ml-[4px] text-[11px] font-bold">Background</span>
                </div>
              </div>
              <div className="mt-[10px] flex items-center justify-between w-[172px] ml-[3px]">
                <svg width="9" height="15" viewBox="0 0 9 15"><path d="M1 0h6l2 3v12H1z" fill="#eee" /><rect x="1" y="3" width="3" height="2" fill="#222" /></svg>
                <svg width="9" height="15" viewBox="0 0 9 15"><path d="M0 5h9v10H0z" fill="#7fa7da" /><path d="M0 0l4 3v2H1z" fill="#ddd" /></svg>
                <svg width="9" height="8" viewBox="0 0 9 8"><path d="M0 7l4.500-5L9 7" fill="none" stroke="#c98a5a" strokeWidth="2.200" strokeDasharray="2 .6" /></svg>
                <svg width="9" height="8" viewBox="0 0 9 8"><path d="M0 1l4.500 5L9 1" fill="none" stroke="#e08a30" strokeWidth="2.200" strokeDasharray="2 .6" /></svg>
                <svg width="9" height="15" viewBox="0 0 9 15"><rect width="9" height="15" fill="#e8e8e8" /><rect x="1" y="2" width="7" height="6" fill="#2a5ba6" /><rect x="1" y="10" width="7" height="3" fill="#2a5ba6" /></svg>
                <svg width="9" height="15" viewBox="0 0 9 15"><circle cx="4.500" cy="2" r="1.700" fill="#bbb" /><rect x="4" y="3" width="2" height="6" fill="#bbb" /><rect y="9" width="9" height="6" fill="#999" /></svg>
                <svg width="10" height="15" viewBox="0 0 10 15"><rect x="1" width="7" height="11" fill="#cfd6c8" /><rect y="11" width="10" height="4" fill="#b5b5b0" /></svg>
                <svg width="13" height="13" viewBox="0 0 13 13"><path d="M1.500 1.500l10 10M11.500 1.500l-10 10" stroke="#d00000" strokeWidth="3" /></svg>
              </div>
            </div>
          </div>
        </div>
      </div>
    </div>
  );
}
